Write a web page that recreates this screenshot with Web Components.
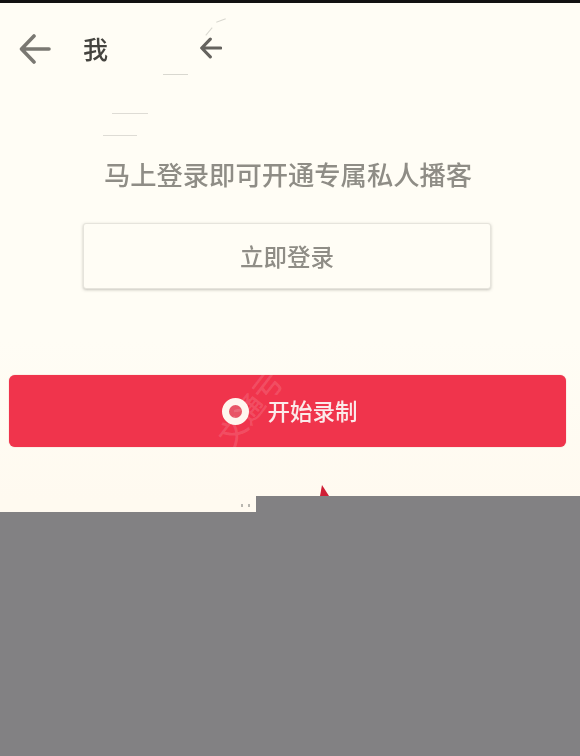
<!DOCTYPE html>
<html lang="zh">
<head>
<meta charset="utf-8">
<style>
html,body{margin:0;padding:0;background:#fffdf5;}
body{width:580px;height:756px;overflow:hidden;font-family:"Noto Sans CJK SC","Liberation Sans",sans-serif;}
</style>
</head>
<body>
<me-page></me-page>
<script>
const ARROW = w => `<svg viewBox="0 0 32 32" width="100%" height="100%" fill="none" stroke="currentColor" stroke-linecap="round" stroke-linejoin="round"><path d="M30 16H3M15 3 2.500 16 15 29" stroke-width="${w}"/></svg>`;

class MeHeader extends HTMLElement{
  constructor(){super();
    this.attachShadow({mode:'open'}).innerHTML=`<style>
      :host{display:flex;align-items:center;height:92px;padding-left:19px;box-sizing:border-box;position:relative}
      .a1{width:32px;height:32px;color:#7a7872;display:block;filter:blur(.4px)}
      .t{margin-left:32px;font-size:25px;line-height:32px;color:#45443f;font-weight:500;width:25px;filter:blur(.45px);margin-top:-2px}
      .a2{margin-left:92px;width:22px;height:22px;color:#65635e;display:block;margin-top:-3px;filter:blur(.4px)}
      .s{position:absolute;height:1px;background:#d9d8d0}
    </style>
    <span class="a1">${ARROW(3.6)}</span><span class="t"><slot></slot></span><span class="a2">${ARROW(4.6)}</span>
    <i class="s" style="left:163px;top:71px;width:25px"></i>
    <i class="s" style="left:216px;top:17px;width:10px;transform:rotate(-20deg)"></i>
    <i class="s" style="left:204px;top:28px;width:10px;transform:rotate(-50deg)"></i>`;
  }
}
class MeLogin extends HTMLElement{
  constructor(){super();
    this.attachShadow({mode:'open'}).innerHTML=`<style>
      :host{display:block;position:relative;padding-top:62px}
      .msg{font-size:26.300px;line-height:34px;font-weight:500;text-align:center;color:#8f8d86;white-space:nowrap;padding-right:4px;filter:blur(.45px)}
      .btn{margin:32px 0 0 83px;width:408px;height:66px;box-sizing:border-box;display:flex;align-items:center;justify-content:center;background:#fffdf5;border:1px solid #e6e4dc;border-radius:3px;box-shadow:0 1px 3px rgba(90,88,80,.35);font-size:23.500px;font-weight:500;color:#8f8d86}
      .btn span{filter:blur(.45px);display:block;margin-top:-1px}
      .s{position:absolute;height:1px;background:#dedcd5}
    </style>
    <div class="msg"><slot name="msg"></slot></div>
    <div class="btn"><span><slot name="btn"></slot></span></div>
    <i class="s" style="left:112px;top:18px;width:36px"></i>
    <i class="s" style="left:103px;top:40px;width:34px"></i>`;
  }
}
class MeRecord extends HTMLElement{
  constructor(){super();
    this.attachShadow({mode:'open'}).innerHTML=`<style>
      :host{display:flex;align-items:center;justify-content:center;gap:18px;position:relative;margin:86px 0 0 9px;width:557px;height:72px;background:#f0344c;border-radius:6px;box-shadow:0 0 1px rgba(200,40,60,.6);color:#fbeaea;font-size:22.500px;font-weight:500;padding-left:5px;box-sizing:border-box}
      .ring{width:27px;height:27px;border-radius:50%;box-sizing:border-box;border:7px solid #fff6ee;background:#e85566;flex:none;filter:blur(.4px)}
      .lbl{filter:blur(.4px);display:block;margin-top:-2px}
      .wm{position:absolute;left:240px;top:33px;font-size:28px;line-height:1;color:rgba(255,255,255,.14);transform:translate(-50%,-50%) rotate(-52deg);white-space:nowrap}
    </style>
    <span class="ring"></span><span class="lbl"><slot></slot></span><span class="wm">文通亏</span>`;
  }
}
class MeOverlay extends HTMLElement{
  constructor(){super();
    this.attachShadow({mode:'open'}).innerHTML=`<style>
      :host{display:block;position:relative;margin-top:49px;height:260px}
      .step{margin-left:256px;height:16px;background:#828183}
      .fill{height:244px;background:#828183}
      .tip{position:absolute;left:320px;top:-11px;width:0;height:0;border-left:2px solid transparent;border-right:7px solid transparent;border-bottom:11px solid #cf1f35}
      .dots{position:absolute;left:241px;top:8px;width:9px;height:3px;background:repeating-linear-gradient(90deg,#b9b7b0 0 2px,transparent 2px 7px)}
    </style>
    <div class="step"></div><div class="fill"></div><i class="tip"></i><i class="dots"></i>`;
  }
}
class MePage extends HTMLElement{
  constructor(){super();
    this.attachShadow({mode:'open'}).innerHTML=`<style>
      :host{display:block;width:580px;height:756px;background:linear-gradient(#fffdf5 0 340px,#fffaf0 500px);overflow:hidden}
      .bar{height:3px;background:#111}
    </style>
    <div class="bar"></div>
    <me-header>我</me-header>
    <me-login><span slot="msg">马上登录即可开通专属私人播客</span><span slot="btn">立即登录</span></me-login>
    <me-record>开始录制</me-record>
    <me-overlay></me-overlay>`;
  }
}
customElements.define('me-header',MeHeader);
customElements.define('me-login',MeLogin);
customElements.define('me-record',MeRecord);
customElements.define('me-overlay',MeOverlay);
customElements.define('me-page',MePage);
</script>
</body>
</html>
